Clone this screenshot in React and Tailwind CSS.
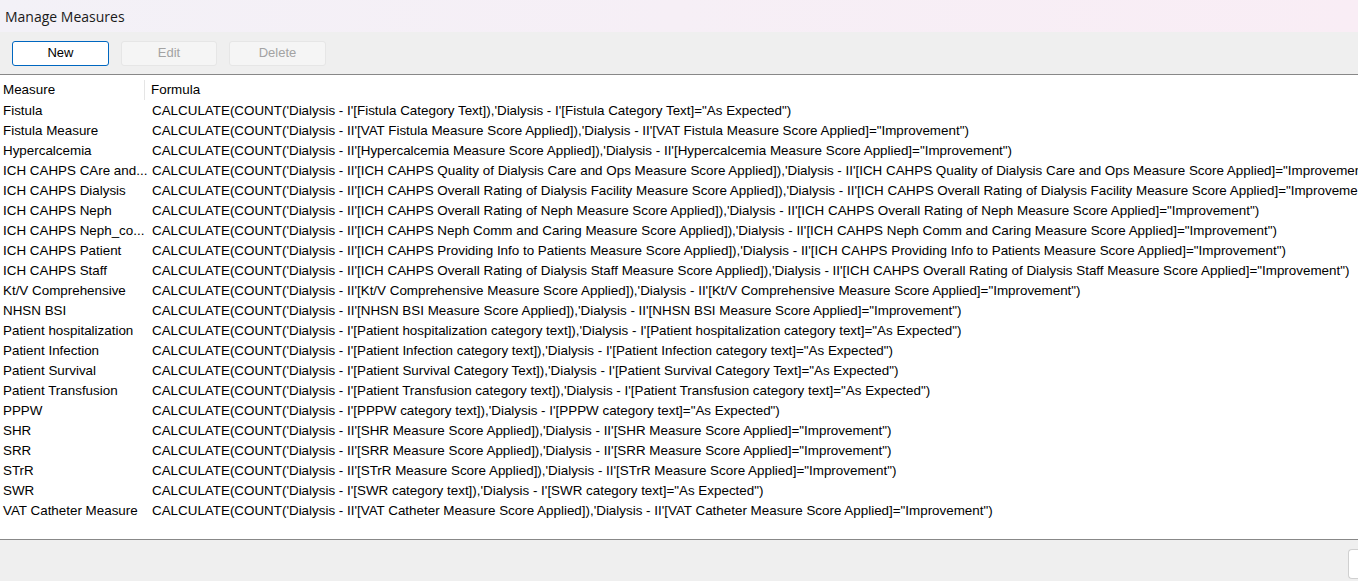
const rows = [
  ['Fistula', `CALCULATE(COUNT('Dialysis - I'[Fistula Category Text]),'Dialysis - I'[Fistula Category Text]="As Expected")`],
  ['Fistula Measure', `CALCULATE(COUNT('Dialysis - II'[VAT Fistula Measure Score Applied]),'Dialysis - II'[VAT Fistula Measure Score Applied]="Improvement")`],
  ['Hypercalcemia', `CALCULATE(COUNT('Dialysis - II'[Hypercalcemia Measure Score Applied]),'Dialysis - II'[Hypercalcemia Measure Score Applied]="Improvement")`],
  ['ICH CAHPS CAre and...', `CALCULATE(COUNT('Dialysis - II'[ICH CAHPS Quality of Dialysis Care and Ops Measure Score Applied]),'Dialysis - II'[ICH CAHPS Quality of Dialysis Care and Ops Measure Score Applied]="Improvement")`],
  ['ICH CAHPS Dialysis', `CALCULATE(COUNT('Dialysis - II'[ICH CAHPS Overall Rating of Dialysis Facility Measure Score Applied]),'Dialysis - II'[ICH CAHPS Overall Rating of Dialysis Facility Measure Score Applied]="Improvement")`],
  ['ICH CAHPS Neph', `CALCULATE(COUNT('Dialysis - II'[ICH CAHPS Overall Rating of Neph Measure Score Applied]),'Dialysis - II'[ICH CAHPS Overall Rating of Neph Measure Score Applied]="Improvement")`],
  ['ICH CAHPS Neph_co...', `CALCULATE(COUNT('Dialysis - II'[ICH CAHPS Neph Comm and Caring Measure Score Applied]),'Dialysis - II'[ICH CAHPS Neph Comm and Caring Measure Score Applied]="Improvement")`],
  ['ICH CAHPS Patient', `CALCULATE(COUNT('Dialysis - II'[ICH CAHPS Providing Info to Patients Measure Score Applied]),'Dialysis - II'[ICH CAHPS Providing Info to Patients Measure Score Applied]="Improvement")`],
  ['ICH CAHPS Staff', `CALCULATE(COUNT('Dialysis - II'[ICH CAHPS Overall Rating of Dialysis Staff Measure Score Applied]),'Dialysis - II'[ICH CAHPS Overall Rating of Dialysis Staff Measure Score Applied]="Improvement")`],
  ['Kt/V Comprehensive', `CALCULATE(COUNT('Dialysis - II'[Kt/V Comprehensive Measure Score Applied]),'Dialysis - II'[Kt/V Comprehensive Measure Score Applied]="Improvement")`],
  ['NHSN BSI', `CALCULATE(COUNT('Dialysis - II'[NHSN BSI Measure Score Applied]),'Dialysis - II'[NHSN BSI Measure Score Applied]="Improvement")`],
  ['Patient hospitalization', `CALCULATE(COUNT('Dialysis - I'[Patient hospitalization category text]),'Dialysis - I'[Patient hospitalization category text]="As Expected")`],
  ['Patient Infection', `CALCULATE(COUNT('Dialysis - I'[Patient Infection category text]),'Dialysis - I'[Patient Infection category text]="As Expected")`],
  ['Patient Survival', `CALCULATE(COUNT('Dialysis - I'[Patient Survival Category Text]),'Dialysis - I'[Patient Survival Category Text]="As Expected")`],
  ['Patient Transfusion', `CALCULATE(COUNT('Dialysis - I'[Patient Transfusion category text]),'Dialysis - I'[Patient Transfusion category text]="As Expected")`],
  ['PPPW', `CALCULATE(COUNT('Dialysis - I'[PPPW category text]),'Dialysis - I'[PPPW category text]="As Expected")`],
  ['SHR', `CALCULATE(COUNT('Dialysis - II'[SHR Measure Score Applied]),'Dialysis - II'[SHR Measure Score Applied]="Improvement")`],
  ['SRR', `CALCULATE(COUNT('Dialysis - II'[SRR Measure Score Applied]),'Dialysis - II'[SRR Measure Score Applied]="Improvement")`],
  ['STrR', `CALCULATE(COUNT('Dialysis - II'[STrR Measure Score Applied]),'Dialysis - II'[STrR Measure Score Applied]="Improvement")`],
  ['SWR', `CALCULATE(COUNT('Dialysis - I'[SWR category text]),'Dialysis - I'[SWR category text]="As Expected")`],
  ['VAT Catheter Measure', `CALCULATE(COUNT('Dialysis - II'[VAT Catheter Measure Score Applied]),'Dialysis - II'[VAT Catheter Measure Score Applied]="Improvement")`],
];

export default function App() {
  return (
    <div className="w-[1358px] h-[581px] overflow-hidden flex flex-col bg-white text-black font-['Liberation_Sans',sans-serif]">
      {/* title bar */}
      <div className="h-[32px] shrink-0 flex items-center px-[5px] bg-gradient-to-r from-[#f3f1f7] to-[#f9edf5]">
        <span className="text-[14px] text-[#1a1a1a] font-['Open_Sans',sans-serif]">Manage Measures</span>
      </div>

      {/* toolbar */}
      <div className="h-[43px] shrink-0 flex items-center gap-[12px] px-[12px] bg-[#efefef] border-b border-[#888888]">
        <button className="w-[97px] h-[25px] rounded-[3px] border border-[#0067c0] bg-white text-[13px] text-black">
          New
        </button>
        <button className="w-[96px] h-[25px] rounded-[3px] border border-[#e6e6e6] bg-[#f5f5f5] text-[13px] text-[#a3a3a3]">
          Edit
        </button>
        <button className="w-[97px] h-[25px] rounded-[3px] border border-[#e6e6e6] bg-[#f5f5f5] text-[13px] text-[#a3a3a3]">
          Delete
        </button>
      </div>

      {/* list */}
      <div className="flex-1 pt-[4px] overflow-hidden text-[13.4px] whitespace-nowrap">
        <div className="flex h-[22px] items-center">
          <div className="w-[145px] shrink-0 pl-[3px] border-r border-[#e5e5e5] h-[20px] flex items-center">Measure</div>
          <div className="pl-[6px]">Formula</div>
        </div>
        {rows.map(([m, f]) => (
          <div key={m} className="flex h-[20px] items-center">
            <div className="w-[149px] shrink-0 pl-[3px] overflow-hidden">{m}</div>
            <div className="pl-[3px]">{f}</div>
          </div>
        ))}
      </div>

      {/* footer */}
      <div className="h-[42px] shrink-0 bg-[#efefef] border-t border-[#888888] flex items-start justify-end pt-[9px]">
        <div className="w-[10px] h-[30px] rounded-l-[4px] border border-r-0 border-[#d0d0d0] bg-white" />
      </div>
    </div>
  );
}
